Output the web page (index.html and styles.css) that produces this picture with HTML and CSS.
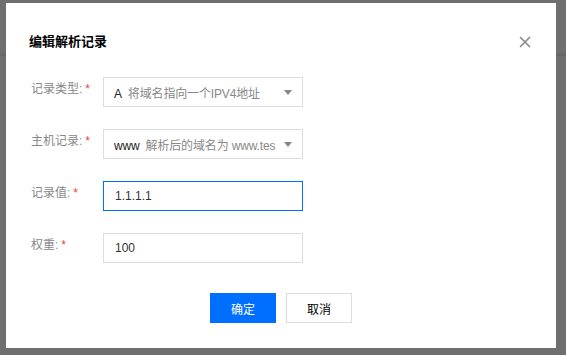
FILE: index.html
```html
<!DOCTYPE html>
<html lang="zh-CN">
<head>
  <meta charset="UTF-8">
  <title>编辑解析记录</title>
  <link rel="stylesheet" href="styles.css">
</head>
<body>
  <div class="backdrop-line"></div>
  <div class="dialog">
    <div class="dialog-header">
      <h3 class="dialog-title">编辑解析记录</h3>
      <button class="dialog-close" aria-label="关闭">
        <svg width="12" height="12" viewBox="0 0 12 12"><path d="M1 1L11 11M11 1L1 11" stroke="#888" stroke-width="1.6" fill="none"/></svg>
      </button>
    </div>

    <div class="form">
      <div class="form-row">
        <label class="form-label">记录类型:<span class="req">*</span></label>
        <div class="select">
          <span class="select-text"><b>A</b><em>将域名指向一个IPV4地址</em></span>
          <span class="caret"></span>
        </div>
      </div>
      <div class="form-row">
        <label class="form-label">主机记录:<span class="req">*</span></label>
        <div class="select">
          <span class="select-text"><b>www</b><em>解析后的域名为 www.tes</em></span>
          <span class="caret"></span>
        </div>
      </div>
      <div class="form-row">
        <label class="form-label">记录值:<span class="req">*</span></label>
        <input class="input is-focus" type="text" value="1.1.1.1">
      </div>
      <div class="form-row">
        <label class="form-label">权重:<span class="req">*</span></label>
        <input class="input" type="text" value="100">
      </div>
    </div>

    <div class="dialog-footer">
      <button class="btn btn-primary">确定</button>
      <button class="btn">取消</button>
    </div>
  </div>
</body>
</html>
```

FILE: styles.css
```css
* { margin: 0; padding: 0; box-sizing: border-box; }
body {
  font-family: "Liberation Sans", "Noto Sans CJK SC", sans-serif;
  font-size: 12px;
  background: #6f6f6f;
  width: 566px;
  height: 355px;
  overflow: hidden;
  padding: 3px 10px 0 6px;
  position: relative;
}
/* 遮罩后面页面的分隔线 */
.backdrop-line {
  position: absolute;
  left: 0;
  right: 0;
  top: 53px;
  height: 3px;
  background: #686868;
}
.dialog {
  position: relative;
  background: #fff;
  width: 550px;
  height: 345px;
  padding: 29px 23px 0 23px;
}
.dialog-header {
  display: flex;
  justify-content: space-between;
  align-items: center;
  height: 20px;
}
.dialog-title {
  font-size: 13px;
  font-weight: bold;
  color: #000;
  line-height: 20px;
}
.dialog-close {
  border: none;
  background: none;
  width: 12px;
  height: 12px;
  margin-right: 2px;
  display: flex;
}
.form {
  margin-top: 25px;
  padding-left: 2px;
  display: flex;
  flex-direction: column;
  gap: 22px;
}
.form-row {
  display: flex;
  height: 30px;
}
.form-label {
  width: 72px;
  color: #888;
  padding-top: 3px;
  line-height: 18px;
}
.req {
  color: #e54545;
  margin-left: 3px;
}
.select, .input {
  width: 200px;
  height: 30px;
  border: 1px solid #ddd;
  background: #fff;
}
.select {
  display: flex;
  align-items: center;
  padding: 0 10px 0 10px;
}
.select-text {
  flex: 1;
  white-space: nowrap;
  overflow: hidden;
  margin-right: 4px;
  letter-spacing: -0.15px;
}
.select-text b {
  font-weight: normal;
  color: #222;
  margin-right: 6px;
}
.select-text em {
  font-style: normal;
  color: #888;
}
.caret {
  flex: none;
  width: 0;
  height: 0;
  border-left: 4px solid transparent;
  border-right: 4px solid transparent;
  border-top: 5px solid #888;
}
.input {
  font: inherit;
  color: #333;
  padding: 0 11px;
  outline: none;
}
.input.is-focus {
  border-color: #006eff;
}
.dialog-footer {
  display: flex;
  justify-content: center;
  gap: 10px;
  margin-top: 30px;
}
.btn {
  font: inherit;
  width: 66px;
  height: 30px;
  border: 1px solid #ddd;
  background: #fff;
  color: #000;
}
.btn-primary {
  background: #006eff;
  border-color: #006eff;
  color: #fff;
}
```
